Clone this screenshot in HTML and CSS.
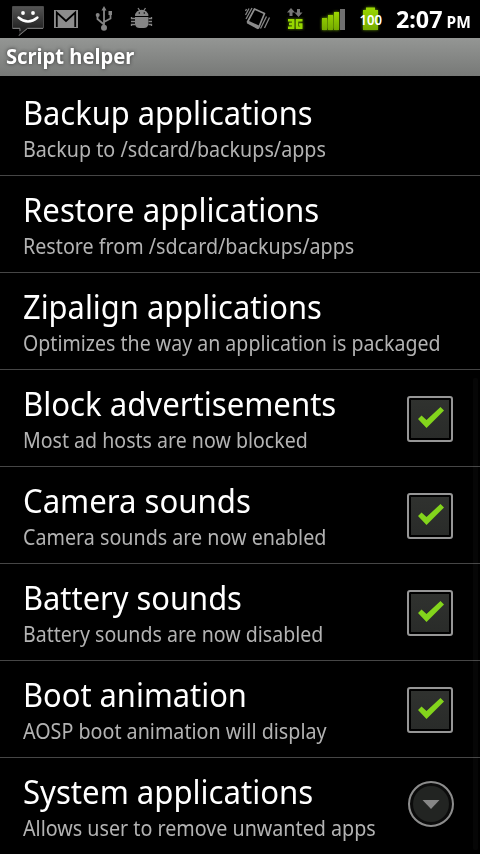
FILE: index.html
```html
<!DOCTYPE html>
<html lang="en">
<head>
<meta charset="utf-8">
<title>Script helper</title>
<link rel="stylesheet" href="styles.css">
</head>
<body>
<div class="status">
  <svg class="icons" width="390" height="38" viewBox="0 0 390 38">
    <defs>
      <linearGradient id="bubble" x1="0" y1="0" x2="0" y2="1"><stop offset="0" stop-color="#555"/><stop offset="1" stop-color="#151515"/></linearGradient>
      <linearGradient id="lime" x1="0" y1="0" x2="0" y2="1"><stop offset="0" stop-color="#9bd800"/><stop offset="1" stop-color="#75ab00"/></linearGradient>
      <filter id="glow" x="-40%" y="-40%" width="180%" height="180%"><feGaussianBlur stdDeviation="1.5"/></filter>
    </defs>
    <path d="M13 6.500h30v21.500H27.500L19 35V28H13z" fill="url(#bubble)"/>
    <path d="M20 28H12.500V6.500h31v21.500H27.500L18.500 35.500" fill="none" stroke="#4b4b4b"/>
    <path d="M12.500 28.500H20V31M43 28.500H27.500L19 35.500" fill="none" stroke="#777"/>
    <circle cx="23" cy="13" r="1.900" fill="#fff"/><circle cx="33" cy="13" r="1.900" fill="#fff"/>
    <path d="M18.500 17.500Q28 25.500 37.500 17.500" fill="none" stroke="#fff" stroke-width="2.300" stroke-linecap="round"/>
    <path d="M54 10h24v18H54z" fill="#8c8c8c"/>
    <path d="M56.800 27V12.500L66 21l9.200-8.500V27" fill="none" stroke="#000" stroke-width="1.800"/>
    <g fill="#858585" stroke="#858585">
      <path d="M104 8v20M97.500 16v3l6.500 5.500M110.500 14v4.500l-6.500 3.500" fill="none" stroke-width="1.800"/>
      <path d="M104 6l2.500 4.500h-5z" stroke="none"/><circle cx="104" cy="27.800" r="3" stroke="none"/>
      <circle cx="97.700" cy="15" r="2" stroke="none"/><path d="M108.500 11h3.500v4h-3.500z" stroke="none"/>
    </g>
    <g fill="#858585">
      <path d="M135 16a6.700 6.300 0 0 1 13.400 0zM135 17h13.400v7.500q-1 3.500-4.500 3.500h-4.400q-3.500 0-4.500-3.500z"/>
      <path d="M138 8l2 3M145.500 8l-2 3M135 18.500h-3.500V17M135 21.500h-4M135 24.500h-3.500V26M148.500 18.500h3V17M148.500 21.500h3.500M148.500 24.500h3V26" fill="none" stroke="#858585" stroke-width="1.300"/>
      <circle cx="139.300" cy="13" r=".8" fill="#000"/><circle cx="144.300" cy="13" r=".8" fill="#000"/>
    </g>
    <path d="M254.500 9l10 4.500-6 14.500-11-6z" fill="#000" stroke="#8f8f8f" stroke-width="1.700" stroke-linejoin="round"/>
    <path d="M248 20.500l11 5-1.200 3.700-11-6z" fill="#8a8a8a"/>
    <path d="M252 8l-6 11M249 8.500l-3.500 6.500M246.500 9l-1 2M266.500 16.500l-6 12M269.500 17.500l-5 10.500" fill="none" stroke="#858585" stroke-width="1.300"/>
    <path d="M291 8l4 4.500h-2.500V16h-3v-3.500H287zM298.500 17l-4-4.500h2.500V9h3v3.500h2.500z" fill="#777"/>
    <path id="net" d="M288 20.200h5.200v7.600H288M289 24h4.200M302.500 20.200h-5.500v7.600h4.300V24.500H299" fill="none" stroke="#4f7600" stroke-width="3" filter="url(#glow)"/>
    <path d="M288 20.200h5.200v7.600H288M289 24h4.200M302.500 20.200h-5.500v7.600h4.300V24.500H299" fill="none" stroke="#96d600" stroke-width="2.400"/>
    <path d="M322 18h5v12h-5zM328 15h5v15h-5zM334 12h5v18h-5z" fill="#80bd00" filter="url(#glow)"/>
    <path d="M322 18h5v12h-5zM328 15h5v15h-5zM334 12h5v18h-5z" fill="url(#lime)"/>
    <path d="M340 9h5v21h-5z" fill="#707070"/>
    <path d="M363 10h3V7.500h9V10h3v20h-15z" fill="#669700" filter="url(#glow)"/>
    <path d="M363 10h3V7.500h9V10h3v20h-15z" fill="url(#lime)"/>
    <text class="level" x="359.500" y="25" textLength="22.500" lengthAdjust="spacingAndGlyphs">100</text>
  </svg>
  <div class="clock">2:07 <span class="ampm">PM</span></div>
</div>
<div class="titlebar"><span class="name">Script helper</span></div>
<div class="list">
  <div class="row"><div class="text"><div class="title">Backup applications</div><div class="sub">Backup to /sdcard/backups/apps</div></div></div>
  <div class="row"><div class="text"><div class="title wide">Restore applications</div><div class="sub">Restore from /sdcard/backups/apps</div></div></div>
  <div class="row"><div class="text"><div class="title">Zipalign applications</div><div class="sub tight">Optimizes the way an application is packaged</div></div></div>
  <div class="row"><div class="text"><div class="title wide">Block advertisements</div><div class="sub tight">Most ad hosts are now blocked</div></div><div class="check"><svg width="28" height="24" viewBox="0 0 28 24"><path d="M1 13l3.500-3.500 5 4.500L23.500 1l3.500 3.500L9.500 22z"/></svg></div></div>
  <div class="row"><div class="text"><div class="title wide">Camera sounds</div><div class="sub">Camera sounds are now enabled</div></div><div class="check"><svg width="28" height="24" viewBox="0 0 28 24"><path d="M1 13l3.500-3.500 5 4.500L23.500 1l3.500 3.500L9.500 22z"/></svg></div></div>
  <div class="row"><div class="text"><div class="title">Battery sounds</div><div class="sub tight">Battery sounds are now disabled</div></div><div class="check"><svg width="28" height="24" viewBox="0 0 28 24"><path d="M1 13l3.500-3.500 5 4.500L23.500 1l3.500 3.500L9.500 22z"/></svg></div></div>
  <div class="row"><div class="text"><div class="title">Boot animation</div><div class="sub">AOSP boot animation will display</div></div><div class="check"><svg width="28" height="24" viewBox="0 0 28 24"><path d="M1 13l3.500-3.500 5 4.500L23.500 1l3.500 3.500L9.500 22z"/></svg></div></div>
  <div class="row"><div class="text"><div class="title wide">System applications</div><div class="sub">Allows user to remove unwanted apps</div></div><div class="more"><svg width="18" height="11" viewBox="0 0 18 11"><path d="M.5 1h17L9 10z"/></svg></div></div>
  <div class="scrollbar"></div>
</div>
</body>
</html>
```
FILE: styles.css
```css
* { box-sizing: border-box; }
body {
  margin: 0;
  width: 480px;
  height: 854px;
  overflow: hidden;
  background: #000;
  color: #fff;
  font-family: "Noto Sans", "Open Sans", sans-serif;
}
.status { height: 38px; display: flex; }
.icons { flex: none; }
.level { font-size: 14px; font-weight: 600; fill: #fff; }
.clock {
  flex: none;
  padding-left: 6px;
  font-size: 24px;
  line-height: 38px;
  font-weight: 700;
  white-space: nowrap;
  transform: scaleX(.97);
  transform-origin: 6px 0;
  word-spacing: -2px;
}
.ampm { font-size: 16px; }
.titlebar {
  height: 38px;
  padding-left: 6px;
  background: linear-gradient(#949694, #777977);
  font-size: 21px;
  line-height: 37px;
  font-weight: 700;
  text-shadow: 0 0 4px #333;
}
.name { display: inline-block; transform: scaleX(.96); transform-origin: 0 0; }
.list { position: relative; padding-top: 3px; }
.row {
  height: 97px;
  padding: 0 26px 0 23px;
  border-bottom: 1px solid #464646;
  display: flex;
  justify-content: space-between;
}
.text { width: 380px; padding-top: 13px; }
.title, .sub { white-space: nowrap; transform-origin: 0 0; }
.title { font-size: 33px; line-height: 41px; transform: scaleX(.935); }
.title.wide { transform: scaleX(.943); }
.sub { margin-top: 1px; font-size: 21px; line-height: 30px; color: #b3b3b3; transform: scaleX(.938); }
.sub.tight { transform: scaleX(.932); }
.check {
  width: 46px;
  height: 46px;
  margin: 26px 1px 0 0;
  border: 2px solid #969696;
  border-radius: 3px;
  background: linear-gradient(#30322f, #292b29);
  box-shadow: inset 0 0 0 2px #000;
  display: flex;
  justify-content: center;
  padding: 8px 0 0 2px;
}
.check path { fill: #83d41c; }
.more {
  width: 46px;
  height: 46px;
  margin-top: 23px;
  border: 2px solid #8c8c8c;
  border-radius: 50%;
  background: #222422;
  box-shadow: inset 0 0 0 3px #0b0b0b;
  display: flex;
  justify-content: center;
  padding-top: 16px;
}
.more path { fill: #868686; }
.scrollbar {
  position: absolute;
  left: 473px;
  top: 302px;
  width: 5px;
  height: 472px;
  border-radius: 2px;
  background: rgba(255, 255, 255, .022);
}
```
